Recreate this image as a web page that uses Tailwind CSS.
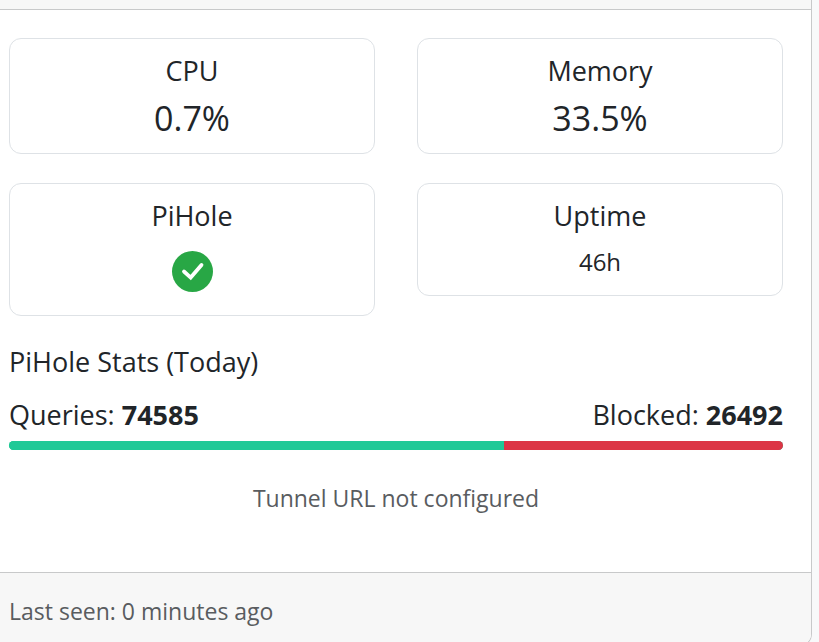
<!DOCTYPE html>
<html lang="en">
  <head>
    <meta charset="UTF-8" />
    <title>Device status</title>
    <meta name="viewport" content="width=device-width, initial-scale=1.0" />
    <script src="https://cdn.jsdelivr.net/npm/@tailwindcss/browser@4"></script>
  </head>
  <body class="bg-[#f8f9fa] pr-[7px] font-['Segoe_UI','Open_Sans',sans-serif] text-[#212529] overflow-hidden">
    <article class="bg-white border-r border-b border-[#c8c9ca] rounded-br-xl overflow-hidden">
      <header class="h-[10px] bg-[#f7f7f7] border-b border-[#c8c9ca]"></header>

      <div class="pl-[9px] pr-7 pt-7 pb-14">
        <div class="grid grid-cols-2 items-start gap-x-[42px] gap-y-[29px] text-center">
          <section class="border border-[#dee2e6] rounded-xl px-4 pt-4 pb-3">
            <h2 class="text-[27px] leading-8">CPU</h2>
            <p class="mt-2 text-[34px] leading-[46px]">0.7%</p>
          </section>
          <section class="border border-[#dee2e6] rounded-xl px-4 pt-4 pb-3">
            <h2 class="text-[27px] leading-8">Memory</h2>
            <p class="mt-2 text-[34px] leading-[46px]">33.5%</p>
          </section>
          <section class="border border-[#dee2e6] rounded-xl px-4 pt-4 pb-[23px]">
            <h2 class="text-[27px] leading-8">PiHole</h2>
            <svg class="mt-[19px] mx-auto size-[41px]" viewBox="0 0 41 41" role="img" aria-label="Running">
              <circle cx="20.5" cy="20.5" r="20.5" fill="#28a745" />
              <path d="M12 20.5 18.7 26.6 29.5 14" fill="none" stroke="#fff" stroke-width="3.8" stroke-linecap="round" stroke-linejoin="miter" />
            </svg>
          </section>
          <section class="border border-[#dee2e6] rounded-xl px-4 pt-4 pb-4">
            <h2 class="text-[27px] leading-8">Uptime</h2>
            <p class="mt-3 text-2xl leading-[35px]">46h</p>
          </section>
        </div>

        <section class="mt-7">
          <h2 class="text-[27px] leading-9">PiHole Stats (Today)</h2>
          <div class="mt-[15px] flex justify-between text-[27px] leading-10">
            <span>Queries: <strong>74585</strong></span>
            <span>Blocked: <strong>26492</strong></span>
          </div>
          <div class="mt-[6px] flex h-[9px] rounded-full overflow-hidden bg-[#20c997]">
            <div class="bg-[#20c997]" style="width: 64%"></div>
            <div class="bg-[#dc3545]" style="width: 36%"></div>
          </div>
        </section>

        <p class="mt-[30px] text-center text-[23px] leading-9 text-[#595c5f]">Tunnel URL not configured</p>
      </div>

      <footer class="bg-[#f7f7f7] border-t border-[#c8c9ca] pl-[9px] pt-5 pb-4 text-[23px] leading-9 text-[#595c5f]">
        Last seen: 0 minutes ago
      </footer>
    </article>
  </body>
</html>
